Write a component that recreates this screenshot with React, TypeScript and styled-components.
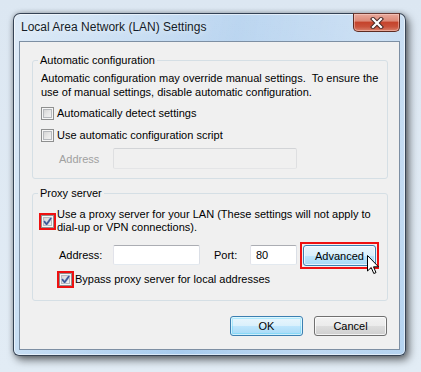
import React from 'react';
import styled, { createGlobalStyle, css } from 'styled-components';

const GlobalStyle = createGlobalStyle`
  html, body { margin: 0; padding: 0; }
  body {
    width: 421px;
    height: 372px;
    overflow: hidden;
    background: linear-gradient(180deg, #dce7f2 0%, #e2ecf5 100%);
    font-family: "Liberation Sans", Arial, sans-serif;
    font-size: 11px;
    color: #000;
  }
  * { box-sizing: border-box; }
`;

const redFrame = (inset: number) => css`
  &::after {
    content: '';
    position: absolute;
    inset: ${-inset}px;
    border: 2px solid #ee1111;
    pointer-events: none;
  }
`;

const Window = styled.div`
  width: 393px;
  height: 343px;
  margin: 13px 0 0 13px;
  display: flex;
  flex-direction: column;
  padding: 0 5px 5px;
  border: 1px solid rgba(28, 40, 56, 0.85);
  border-radius: 7px 7px 6px 6px;
  background:
    linear-gradient(100deg, rgba(255,255,255,0.5) 0%, rgba(255,255,255,0.15) 35%, rgba(255,255,255,0) 50%, rgba(255,255,255,0.25) 80%, rgba(255,255,255,0.15) 100%),
    linear-gradient(180deg, #bcd6f0 0%, #b4d2ef 60%, #a8ccee 100%);
  box-shadow:
    inset 0 0 0 1px rgba(255, 255, 255, 0.55),
    3px 4px 9px rgba(0, 0, 0, 0.55),
    0 0 5px rgba(0, 0, 0, 0.25);
`;

const TitleBar = styled.div`
  height: 27px;
  flex: none;
  display: flex;
  justify-content: space-between;
  align-items: flex-start;
`;

const Title = styled.div`
  margin-top: 6px;
  padding-left: 2px;
  font-family: "Liberation Sans", Arial, sans-serif;
  font-size: 12px;
  line-height: 15px;
  color: #141c28;
  text-shadow: 0 0 6px rgba(255, 255, 255, 0.9);
`;

const CloseButton = styled.div`
  width: 47px;
  height: 19px;
  margin-top: -1px;
  border: 1px solid #5e2b22;
  border-top-color: #6a3a33;
  border-radius: 0 0 5px 5px;
  background: linear-gradient(180deg, #e9a99b 0%, #dc8a78 40%, #c5442c 50%, #c9523b 75%, #d9826c 100%);
  box-shadow: inset 0 0 0 1px rgba(255, 220, 210, 0.45);
  display: flex;
  align-items: center;
  justify-content: center;
`;

const Client = styled.div`
  flex: 1;
  display: flex;
  flex-direction: column;
  border: 1px solid #7d8fa3;
  background: #f0f0f0;
  padding: 0 11px 0 12px;
`;

const Group = styled.div<{ $top: number; $bottom: number }>`
  margin-top: ${(p) => p.$top}px;
  display: flex;
  flex-direction: column;
  align-items: flex-start;
  border: 1px solid #d5dfe5;
  border-radius: 3px;
  padding: 0 8px ${(p) => p.$bottom}px;
`;

const Caption = styled.div`
  margin-top: -7px;
  margin-left: -3px;
  padding: 0 2px;
  line-height: 13px;
  background: #f0f0f0;
`;

const Description = styled.div`
  margin-top: 4px;
  line-height: 14px;
`;

const CheckRow = styled.div<{ $top: number; $indent?: number }>`
  margin-top: ${(p) => p.$top}px;
  margin-left: ${(p) => p.$indent ?? 0}px;
  display: flex;
  align-items: center;
  gap: 3px;
  line-height: 13px;
`;

const Box = styled.span<{ $marked?: boolean }>`
  position: relative;
  flex: none;
  width: 13px;
  height: 13px;
  border: 1px solid #8e8f8f;
  background: linear-gradient(135deg, #cbcbcb 0%, #e6e6e6 50%, #f8f8f8 100%);
  box-shadow: inset 0 0 0 1px #f6f6f6, inset 0 0 0 2px #b5b8bc;
  ${(p) => p.$marked && redFrame(3)}
  svg { position: absolute; left: -1px; top: -1px; }
`;

const FieldRow = styled.div<{ $top: number }>`
  margin-top: ${(p) => p.$top}px;
  margin-left: 18px;
  display: flex;
  align-items: flex-start;
`;

const FieldLabel = styled.span<{ $width: number; $disabled?: boolean; $h: number; $ml?: number }>`
  width: ${(p) => p.$width}px;
  height: ${(p) => p.$h}px;
  margin-left: ${(p) => p.$ml ?? 0}px;
  display: flex;
  align-items: center;
  color: ${(p) => (p.$disabled ? '#a0a0a0' : '#000')};
`;

const TextBox = styled.input<{ $width: number; $h: number }>`
  width: ${(p) => p.$width}px;
  height: ${(p) => p.$h}px;
  margin: 0;
  padding: 0 5px;
  border: 1px solid;
  border-color: #abadb3 #dbdfe6 #e3e9ef #e2e3ea;
  border-radius: 2px;
  background: #fff;
  font: inherit;
  color: #000;
  outline: none;
  &:disabled {
    background: #f0f0f0;
    border-color: #d2d4d7 #dedfe1 #e4e5e7 #dedfe1;
  }
`;

const Button = styled.button<{ $variant: 'normal' | 'default' | 'hover'; $marked?: boolean; $ml?: number }>`
  position: relative;
  width: 73px;
  height: 21px;
  margin: 0 0 0 ${(p) => p.$ml ?? 0}px;
  padding: 0;
  border-radius: 3px;
  font: inherit;
  color: #000;
  border: 1px solid #707070;
  box-shadow: inset 0 0 0 1px rgba(255, 255, 255, 0.75);
  background: linear-gradient(180deg, #f2f2f2 0%, #ebebeb 50%, #dddddd 51%, #cfcfcf 100%);
  ${(p) =>
    p.$variant === 'default' &&
    css`
      border-color: #3c7fb1;
      box-shadow: inset 0 0 0 1px rgba(255, 255, 255, 0.6), inset 0 0 0 2px rgba(72, 216, 251, 0.35);
      background: linear-gradient(180deg, #eaf6fd 0%, #d9f0fc 50%, #bee6fd 51%, #a7d9f5 100%);
    `}
  ${(p) =>
    p.$variant === 'hover' &&
    css`
      border-color: #3c7fb1;
      box-shadow: inset 0 0 0 1px rgba(255, 255, 255, 0.7);
      background: linear-gradient(180deg, #eaf6fd 0%, #d9f0fc 50%, #bee6fd 51%, #a7d9f5 100%);
    `}
  ${(p) => p.$marked && redFrame(4)}
`;

const Cursor = styled.svg`
  position: absolute;
  left: 63px;
  top: 9px;
  z-index: 1;
  pointer-events: none;
`;

const ButtonBar = styled.div`
  margin-top: 15px;
  margin-right: 1px;
  display: flex;
  justify-content: flex-end;
  gap: 11px;
`;

const BarButton = styled(Button)`
  height: 20px;
`;

const Check = () => (
  <svg width="13" height="13" viewBox="0 0 13 13">
    <path d="M3.4 6.6 L5.6 9.3 L9.8 3.4" fill="none" stroke="#c5cde0" strokeWidth="3" strokeLinecap="round" strokeLinejoin="round" />
    <path d="M3.4 6.6 L5.6 9.3 L9.8 3.4" fill="none" stroke="#3f5a96" strokeWidth="1.7" strokeLinecap="round" strokeLinejoin="round" />
  </svg>
);

const Checkbox = ({ checked, marked }: { checked?: boolean; marked?: boolean }) => (
  <Box $marked={marked}>{checked && <Check />}</Box>
);

export default function App() {
  return (
    <>
      <GlobalStyle />
      <Window>
        <TitleBar>
          <Title>Local Area Network (LAN) Settings</Title>
          <CloseButton>
            <svg width="14" height="12" viewBox="0 0 14 12">
              <path d="M3 2 L11 10 M11 2 L3 10" stroke="#4a2a26" strokeWidth="4.2" strokeLinecap="square" />
              <path d="M3 2 L11 10 M11 2 L3 10" stroke="#ffffff" strokeWidth="2.2" strokeLinecap="square" />
            </svg>
          </CloseButton>
        </TitleBar>
        <Client>
          <Group $top={18} $bottom={9}>
            <Caption>Automatic configuration</Caption>
            <Description>
              Automatic configuration may override manual settings.&nbsp; To ensure the
              <br />
              use of manual settings, disable automatic configuration.
            </Description>
            <CheckRow $top={8}>
              <Checkbox />
              <span>Automatically detect settings</span>
            </CheckRow>
            <CheckRow $top={9}>
              <Checkbox />
              <span>Use automatic configuration script</span>
            </CheckRow>
            <FieldRow $top={6}>
              <FieldLabel $width={54} $h={21} $disabled>
                Address
              </FieldLabel>
              <TextBox $width={184} $h={21} disabled />
            </FieldRow>
          </Group>
          <Group $top={14} $bottom={14}>
            <Caption>Proxy server</Caption>
            <CheckRow $top={8}>
              <Checkbox checked marked />
              <span>
                Use a proxy server for your LAN (These settings will not apply to
                <br />
                dial-up or VPN connections).
              </span>
            </CheckRow>
            <FieldRow $top={11}>
              <FieldLabel $width={54} $h={20}>
                Address:
              </FieldLabel>
              <TextBox $width={87} $h={20} />
              <FieldLabel $width={36} $h={20} $ml={14}>
                Port:
              </FieldLabel>
              <TextBox $width={47} $h={20} value="80" readOnly />
              <Button $variant="hover" $marked $ml={6}>
                Advanced
                <Cursor width="13" height="20" viewBox="0 0 13 20">
                  <path
                    d="M0.5 0.5 L0.5 16 L4.2 12.5 L6.8 18.5 L9 17.6 L6.5 11.8 L11.5 11.8 Z"
                    fill="#ffffff"
                    stroke="#000000"
                    strokeWidth="1"
                    strokeLinejoin="miter"
                  />
                </Cursor>
              </Button>
            </FieldRow>
            <CheckRow $top={7} $indent={18}>
              <Checkbox checked marked />
              <span>Bypass proxy server for local addresses</span>
            </CheckRow>
          </Group>
          <ButtonBar>
            <BarButton $variant="default">OK</BarButton>
            <BarButton $variant="normal">Cancel</BarButton>
          </ButtonBar>
        </Client>
      </Window>
    </>
  );
}
